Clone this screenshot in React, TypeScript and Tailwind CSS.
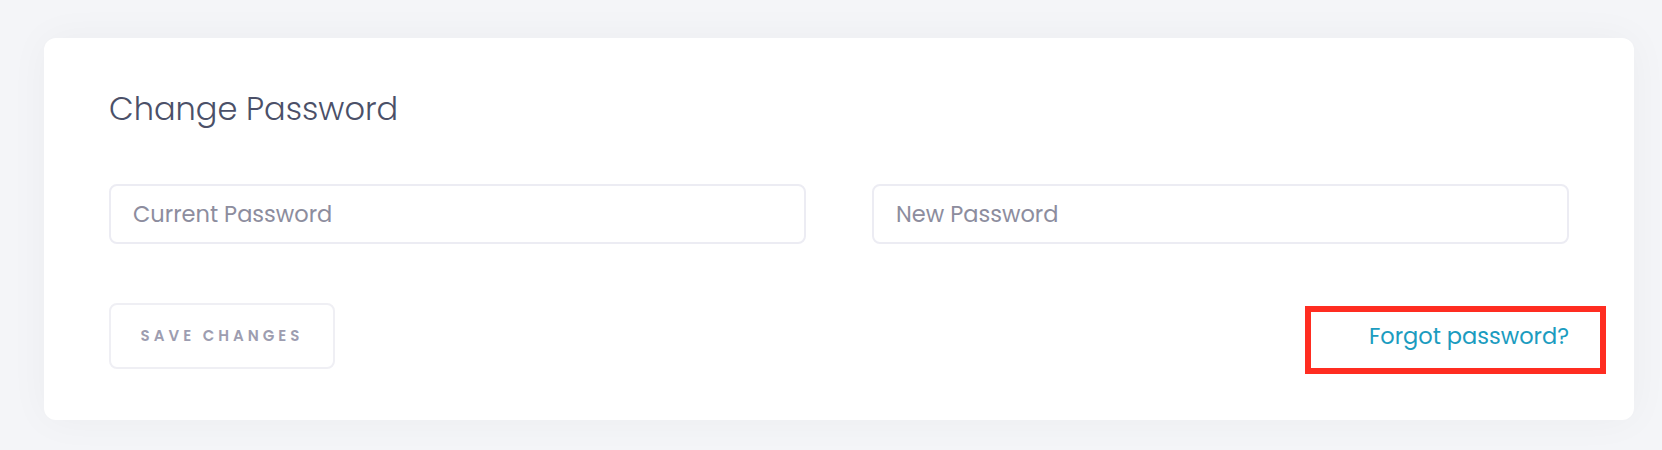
import { useState } from 'react'

const font = { fontFamily: 'Poppins, "Open Sans", "Noto Sans", sans-serif' }

export default function App() {
  const [current, setCurrent] = useState('')
  const [next, setNext] = useState('')
  return (
    <div style={font} className="h-[450px] bg-[#f4f5f8] pl-[44px] pr-[28px] pt-[38px]">
      <div className="h-[382px] rounded-[12px] bg-white px-[65px] pt-[51px] shadow-[0_0_40px_rgba(20,30,60,0.04)]">
        <h2 className="text-[32px] font-light leading-[40px] text-[#4b5068]">Change Password</h2>
        <div className="mt-[55px] grid grid-cols-2 gap-[66px]">
          <input
            value={current}
            onChange={e => setCurrent(e.target.value)}
            type="password"
            placeholder="Current Password"
            className="h-[60px] rounded-[8px] border-2 border-[#ececf3] px-[22px] text-[22.5px] text-[#4b5068] outline-none placeholder:text-[#8d8d9e]"
          />
          <input
            value={next}
            onChange={e => setNext(e.target.value)}
            type="password"
            placeholder="New Password"
            className="h-[60px] rounded-[8px] border-2 border-[#ececf3] px-[22px] text-[22.5px] text-[#4b5068] outline-none placeholder:text-[#8d8d9e]"
          />
        </div>
        <div className="mt-[59px] flex items-center justify-between">
          <button className="h-[66px] w-[226px] rounded-[8px] border-2 border-[#efeff4] text-[15px] font-semibold uppercase tracking-[4px] text-[#9d9db0]">
            Save Changes
          </button>
          <span className="relative">
            <a href="#" className="block text-[22.5px] leading-[30px] text-[#1b9cc0]">Forgot password?</a>
            <span className="pointer-events-none absolute -top-[15px] -bottom-[23px] -left-[64px] -right-[37px] border-[6px] border-[#ff2d21]" />
          </span>
        </div>
      </div>
    </div>
  )
}
